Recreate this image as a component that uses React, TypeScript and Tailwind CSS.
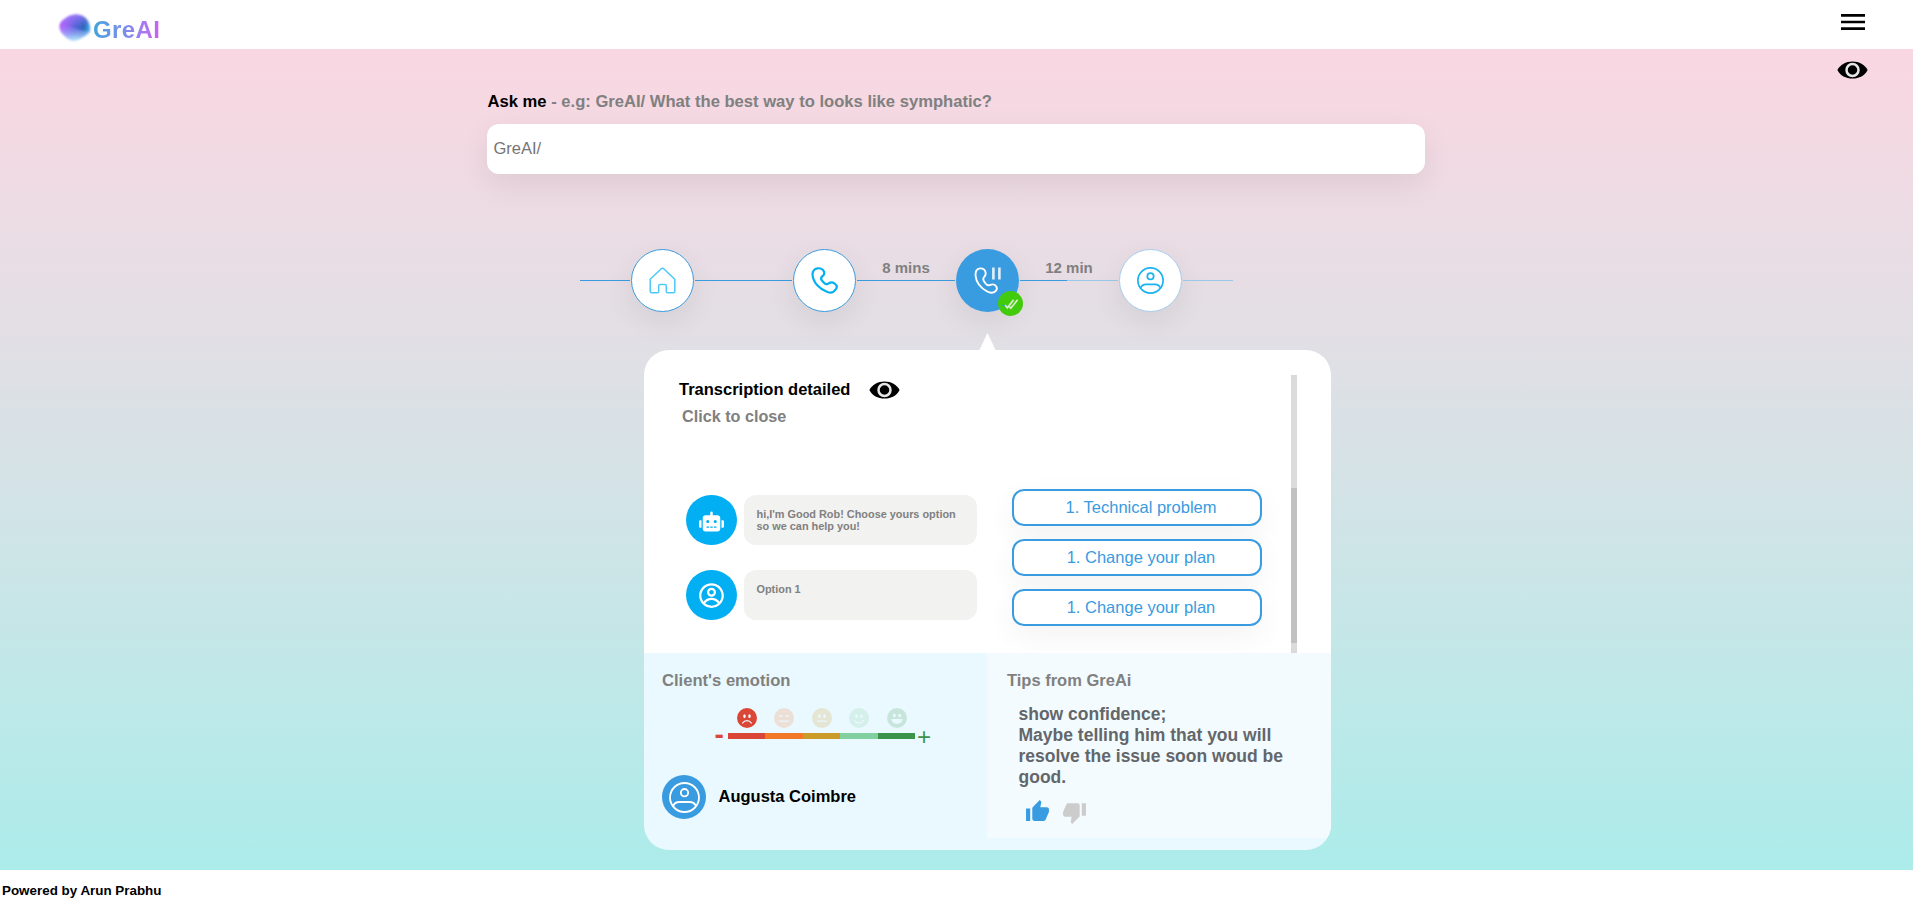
import type { ReactNode } from "react";
import { BsEmojiExpressionlessFill, BsEmojiFrownFill, BsEmojiNeutralFill, BsEmojiSmileFill } from "react-icons/bs";
import { CgProfile } from "react-icons/cg";
import { FaRobot } from "react-icons/fa";
import { MdMenu, MdThumbDown, MdThumbUp } from "react-icons/md";

function Eye() {
  return (
    <svg width="31" height="18" viewBox="0 0 31 18" className="block">
      <path d="M0.4 9C3.2 3.4 8.8 0.4 15.5 0.4S27.8 3.4 30.6 9C27.8 14.6 22.2 17.6 15.5 17.6S3.2 14.6 0.4 9Z" fill="#000" />
      <circle cx="15.5" cy="9" r="6" fill="#000" stroke="#fff" strokeOpacity="0.9" strokeWidth="2.5" />
    </svg>
  );
}

function House() {
  return (
    <svg width="27" height="27" viewBox="0 0 27 27" fill="none" stroke="#4cc9f7" strokeWidth="1.5" strokeLinejoin="round">
      <path d="M1.2 12.2L12.3 1.7Q13.5 0.7 14.7 1.7L25.8 12.2V24.3Q25.8 25.8 24.3 25.8H18.6Q17.3 25.8 17.3 24.5V18.9Q17.3 17.5 15.9 17.5H11.1Q9.7 17.5 9.7 18.9V24.5Q9.7 25.8 8.4 25.8H2.7Q1.2 25.8 1.2 24.3Z" />
    </svg>
  );
}

function Phone() {
  return (
    <svg width="27" height="27" viewBox="0 0 27 27" fill="none" stroke="#05aff2" strokeWidth="2.2" strokeLinejoin="round">
      <path d="M1.6 8.3C1.2 4.4 3.4 1.6 6.6 1.3C9.2 1 11.6 1.9 12.8 4.2C13.9 6.4 13.3 7.7 11.7 9C9.9 10.3 9.5 11.5 10.7 13.2C11.6 14.5 12.4 15.3 13.6 16.3C15.2 17.6 16.4 17.5 18.1 16.2C19.8 14.9 21.6 15 23.4 16.3C25.9 18 26.4 19.9 25 22C23.2 25 20.2 26.4 16.4 25C9 22.3 2.4 15.8 1.6 8.3Z" />
    </svg>
  );
}

function PhonePaused() {
  return (
    <svg width="27" height="27" viewBox="0 0 27 27" fill="none" stroke="#fff">
      <path d="M1.6 9C1.2 4.5 2.8 1.6 6 1.4C8.6 1.2 10.6 2.4 11.4 4.8C12.1 7 11.6 8.5 10.2 9.9C9 11.1 9 12.2 9.8 13.9C10.5 15.3 11.3 16.4 12.4 17.4C13.7 18.6 14.8 18.6 16.4 17.9C18.5 17 20.5 17.2 21.9 19C23.3 20.8 23.2 22.5 21.7 24C19.5 26.2 16.2 26.3 12.8 24.3C6.6 20.7 2.2 15.2 1.6 9Z" strokeWidth="1.9" />
      <path d="M19.4 0.6V12.4M25.4 0.6V12.4" strokeWidth="2.6" strokeOpacity="0.85" />
    </svg>
  );
}

function Person({ size, color, weight }: { size: number; color: string; weight: number }) {
  return (
    <svg width={size} height={size} viewBox="0 0 27 27" fill="none" stroke={color} strokeWidth={weight} className="block">
      <circle cx="13.5" cy="13.5" r="12.6" />
      <circle cx="13.5" cy="9.3" r="3.2" />
      <path d="M3.4 21.6C4.2 18.8 6.4 17.4 9.2 17.4H17.8C20.6 17.4 22.8 18.8 23.6 21.6" />
    </svg>
  );
}

function DoubleCheck() {
  return (
    <svg width="17" height="12" viewBox="0 0 17 12" fill="none" stroke="#d5efc8" strokeWidth="1.8">
      <path d="M3 7L5.4 9.800L11.600 1.800" />
      <path d="M7.400 8.600L8.800 10.200L15.600 1.800" />
      <path d="M0.800 6.600L2.600 8.400" stroke="#399be0" strokeWidth="2" />
    </svg>
  );
}

function GrinFace() {
  return (
    <svg width="20" height="20" viewBox="0 0 20 20" className="block">
      <circle cx="10" cy="10" r="10" fill="#c8e5dc" />
      <ellipse cx="7.3" cy="7.6" rx="1.4" ry="1.8" fill="#eaf9ff" />
      <ellipse cx="12.7" cy="7.6" rx="1.4" ry="1.8" fill="#eaf9ff" />
      <path d="M4.500 11H15.500C15.500 14 13 15.800 10 15.800S4.500 14 4.500 11Z" fill="#eaf9ff" />
    </svg>
  );
}

function Rail({ className, label, children }: { className: string; label?: string; children?: ReactNode }) {
  return (
    <div className={`relative h-px ${className}`}>
      {label && <span className="absolute -top-[21px] left-0 w-full text-center text-[15px] leading-[17px] font-bold whitespace-nowrap text-[#808080]">{label}</span>}
      {children}
    </div>
  );
}

function Step({ className, children }: { className: string; children: ReactNode }) {
  return (
    <div className={`relative flex size-[63px] shrink-0 items-center justify-center rounded-full shadow-[0_10px_30px_rgba(0,0,0,0.07)] ${className}`}>
      {children}
    </div>
  );
}

function Message({ icon, text }: { icon: ReactNode; text: string }) {
  return (
    <div className="flex gap-[7px]">
      <div className="flex h-[50px] w-[51px] items-center justify-center rounded-full bg-[#02aff2]">{icon}</div>
      <p className="h-[50px] w-[233px] rounded-xl bg-[#f2f2f1] pt-[13px] pr-4 pl-[12.5px] text-[10.9px] leading-3 font-bold text-[#808080]">{text}</p>
    </div>
  );
}

const options = ["1. Technical problem", "1. Change your plan", "1. Change your plan"];

export default function App() {
  return (
    <div className="flex h-[905px] w-full flex-col bg-white font-['Liberation_Sans',Arial,sans-serif] text-black">
      <header className="flex h-[49px] shrink-0 justify-between pr-[44px] pl-[59px]">
        <div className="flex pt-[14px]">
          <svg width="32" height="27" viewBox="0 0 32 27" className="blur-[0.8px]">
            <defs>
              <linearGradient id="blob" x1="0" y1="0.4" x2="1" y2="0.5">
                <stop offset="0" stopColor="#c45cf8" />
                <stop offset="0.2" stopColor="#a962f4" />
                <stop offset="0.5" stopColor="#5a62d8" />
                <stop offset="0.8" stopColor="#2867b8" />
                <stop offset="1" stopColor="#52b4ee" />
              </linearGradient>
              <linearGradient id="glow" x1="0.5" y1="0" x2="0.55" y2="0.5">
                <stop offset="0" stopColor="#a47cfc" stopOpacity="0.9" />
                <stop offset="1" stopColor="#7a70f0" stopOpacity="0" />
              </linearGradient>
              <linearGradient id="sheen" x1="0.4" y1="0" x2="0.5" y2="1">
                <stop offset="0" stopColor="#8c8cff" stopOpacity="0.2" />
                <stop offset="1" stopColor="#b4f0fc" />
              </linearGradient>
            </defs>
            <path d="M0.5 13C0 8 5 5 9 2.5C14 -0.5 22 -0.3 26 3.5C30 7 32 12 31 17C29.5 21 26 21.500 22 24C18 27 12 27.500 8 24C4.500 20.500 1 18.500 0.500 13Z" fill="url(#blob)" />
            <path d="M0.500 13C0 8 5 5 9 2.500C14 -0.500 22 -0.300 26 3.500C30 7 32 12 31 17C29.500 21 26 21.500 22 24C18 27 12 27.500 8 24C4.500 20.500 1 18.500 0.500 13Z" fill="url(#glow)" />
            <path d="M0.500 13C9 9 18 17 31 17C29.500 21 26 21.500 22 24C18 27 12 27.500 8 24C4.500 20.500 1 18.500 0.500 13Z" fill="url(#sheen)" />
          </svg>
          <span className="ml-[2px] bg-linear-to-r from-[#3fa3dc] via-[#7d8cec] to-[#c860f5] bg-clip-text pt-[2px] font-['Liberation_Sans',sans-serif] text-[24px] leading-7 font-bold tracking-[0.4px] text-transparent blur-[0.6px]">GreAI</span>
        </div>
        <MdMenu size={32} className="mt-[6px]" />
      </header>

      <main className="flex h-[821px] shrink-0 flex-col bg-linear-to-b from-[#fad7e2] to-[#abecea]">
        <div className="flex h-[40px] justify-end pt-[12px] pr-[45px]">
          <Eye />
        </div>

        <section className="ml-[486.5px] flex w-[938px] flex-col">
          <h1 className="h-[34px] pt-[3px] pl-px text-[16.6px] leading-5 font-bold text-[#808080]">
            <span className="text-black">Ask me</span> - e.g: GreAI/ What the best way to looks like symphatic?
          </h1>
          <input
            placeholder="GreAI/"
            className="mt-px h-[50px] rounded-xl bg-white px-[7px] pb-[2px] text-[16.5px] shadow-[0_10px_30px_rgba(0,0,0,0.08)] outline-none placeholder:text-[#757575]"
          />
        </section>

        <nav className="mt-[75px] flex h-[63px] items-center gap-px pl-[580px]">
          <Rail className="w-[50px] bg-[#399be0]" />
          <Step className="border border-[#399be0] bg-white"><House /></Step>
          <Rail className="w-[97px] bg-[#399be0]" />
          <Step className="border border-[#399be0] bg-white"><Phone /></Step>
          <Rail className="w-[98px] bg-[#399be0]" label="8 mins" />
          <Step className="bg-[#399be0]">
            <PhonePaused />
            <span className="absolute top-[42px] left-[42px] flex size-[25px] items-center justify-center rounded-full bg-[#41cb0b]"><DoubleCheck /></span>
          </Step>
          <Rail className="w-[98px] bg-[#99c8e8]" label="12 min">
            <div className="h-px w-[47px] bg-[#399be0]" />
          </Rail>
          <Step className="border border-[#a5cdef] bg-white"><Person size={27} color="#18b3f2" weight={1.7} /></Step>
          <Rail className="w-[50px] bg-[#99c8e8]" />
        </nav>

        <section className="relative mt-[38px] ml-[644px] flex h-[500px] w-[687px] flex-col">
          <svg width="17" height="18" viewBox="0 0 17 18" className="absolute -top-[17px] left-[334.5px]"><path d="M8.5 0L17 18H0Z" fill="#fff" /></svg>
          <div className="flex h-[303px] justify-between overflow-hidden rounded-t-[25px] bg-white pt-[25px] pr-[34px] pl-[35px]">
            <div>
              <div className="flex h-[30px] items-center gap-[19px]">
                <h2 className="w-[171px] pb-0.5 text-[16.5px] leading-5 font-bold whitespace-nowrap">Transcription detailed</h2>
                <Eye />
              </div>
              <p className="pt-px pl-[3px] text-[16.2px] leading-5 font-bold text-[#808080]">Click to close</p>
              <div className="flex gap-[35px] pt-[63px] pl-[7px]">
                <div className="flex flex-col gap-[25px] pt-[6px]">
                  <Message icon={<FaRobot size={25} className="mt-[2px] text-white" />} text="hi,I'm Good Rob! Choose yours option so we can help you!" />
                  <Message icon={<CgProfile size={27} className="text-white" />} text="Option 1" />
                </div>
                <div className="flex flex-col gap-[13px]">
                  {options.map((option, i) => (
                    <button key={i} className="h-[37px] w-[250px] rounded-xl border-2 border-[#399be0] bg-white pb-0.5 pl-2 text-[16.5px] leading-5 text-[#399be0] shadow-[0_10px_30px_rgba(0,0,0,0.05)]">{option}</button>
                  ))}
                </div>
              </div>
            </div>
            <div className="flex h-[278px] w-[6px] flex-col justify-end bg-[#dedede] pb-[10px] shadow-[inset_0_0_6px_rgba(0,0,0,0.03)]">
              <div className="h-[155px] bg-[#c1c1c1]" />
            </div>
          </div>

          <div className="flex h-[197px] overflow-hidden rounded-b-[25px] bg-[#eaf9ff]">
            <div className="w-[343px] pt-[17px] pl-[18px]">
              <h3 className="pt-px text-[16.6px] leading-[19px] font-bold text-[#808080]">Client's emotion</h3>
              <div className="flex pt-[18px] pl-[66px]">
                <div className="flex w-[187px] flex-col gap-[5px]">
                  <div className="grid h-5 grid-cols-5 justify-items-center">
                    <BsEmojiFrownFill size={20} className="text-[#db4737]" />
                    <BsEmojiExpressionlessFill size={20} className="text-[#ecdfd6]" />
                    <BsEmojiNeutralFill size={20} className="ml-px text-[#e4e6d3]" />
                    <BsEmojiSmileFill size={20} className="text-[#d5f0ea]" />
                    <div className="pl-px"><GrinFace /></div>
                  </div>
                  <div className="relative grid h-[6px] grid-cols-5">
                    <span className="absolute -top-[8px] -left-[13.5px] text-[28px] leading-5 font-bold text-[#db4737]">-</span>
                    <div className="bg-[#db4737]" />
                    <div className="bg-[#f37826]" />
                    <div className="bg-[#cc9a27]" />
                    <div className="bg-[#83cf9f]" />
                    <div className="bg-[#3c934b]" />
                    <span className="absolute -top-[6px] left-[189px] text-[24px] leading-5 text-[#3c934b]">+</span>
                  </div>
                </div>
              </div>
              <div className="flex items-center gap-[12.5px] pt-[36px]">
                <div className="flex size-[44px] items-center justify-center rounded-full bg-[#399be0]"><Person size={31} color="#fff" weight={1.6} /></div>
                <p className="pb-[2px] text-[16.5px] leading-5 font-bold">Augusta Coimbre</p>
              </div>
            </div>
            <div className="h-[185px] w-[344px] bg-[#f3fbff] pt-[17px] pl-5">
              <h3 className="text-[16.5px] leading-5 font-bold text-[#808080]">Tips from GreAi</h3>
              <p className="w-[280px] pt-[14px] pl-[11.5px] text-[17.5px] leading-[21px] font-bold text-[#63666a]">
                show confidence;
                <br />
                Maybe telling him that you will resolve the issue soon woud be good.
              </p>
              <div className="flex gap-[12px] pt-[11px] pl-[18px]">
                <MdThumbUp size={25} className="text-[#399be0]" />
                <MdThumbDown size={25} className="mt-px text-[#cccccc]" />
              </div>
            </div>
          </div>
        </section>
      </main>

      <footer className="h-[35px] pt-[13px] pl-[2px] text-[13.4px] leading-4 font-bold">Powered by Arun Prabhu</footer>
    </div>
  );
}
